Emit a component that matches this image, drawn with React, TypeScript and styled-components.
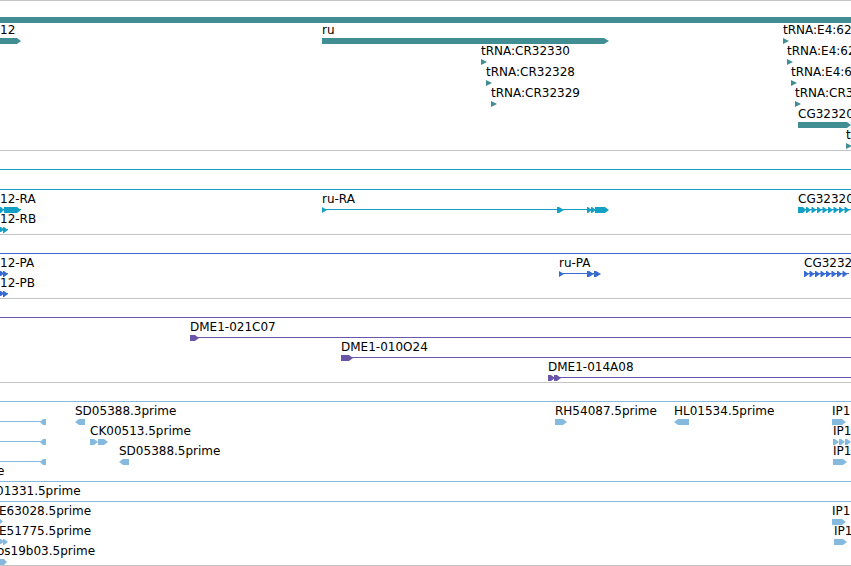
import styled, { createGlobalStyle } from "styled-components";

const GlobalStyle = createGlobalStyle`
  html, body {
    margin: 0;
    padding: 0;
    background: #fff;
  }
  body {
    font-family: "DejaVu Sans", "Liberation Sans", sans-serif;
  }
`;

const Browser = styled.div`
  width: 851px;
  height: 566px;
  overflow: hidden;
  display: flex;
  flex-direction: column;
  background: #fff;
`;

const Track = styled.section<{ $height?: number }>`
  flex: ${p => (p.$height ? "none" : "1")};
  height: ${p => (p.$height ? `${p.$height}px` : "auto")};
  box-sizing: border-box;
  border-top: 1px solid #c4c4c4;
  padding-top: 2px;
  display: flex;
  flex-direction: column;
`;

const Row = styled.div<{ $height: number }>`
  position: relative;
  flex: none;
  height: ${p => p.$height}px;
`;

const Feature = styled.div`
  position: absolute;
  top: 0;
  display: flex;
  flex-direction: column;
  align-items: flex-start;
`;

const Label = styled.span`
  display: block;
  margin-top: 1px;
  height: 11px;
  line-height: 11px;
  font-size: 12px;
  color: #000;
  white-space: nowrap;
`;

const Glyph = styled.svg`
  display: block;
  height: 8px;
  overflow: visible;

  rect {
    shape-rendering: crispEdges;
  }
`;

// x, width, height, direction, tip length
type Part = [number, number, number, "r" | "l" | "n", number];

interface GlyphSpec {
  w: number;
  line?: [number, number];
  parts?: Part[];
}

interface Feat {
  x: number;
  label?: string;
  glyph: GlyphSpec;
}

interface TrackSpec {
  name: string;
  height: number;
  rowHeight: number;
  color: string;
  rows: Feat[][];
}

const W = 851;

const rule = (x = 0): GlyphSpec => ({ w: W - x, line: [0, W - x] });
const tri: GlyphSpec = { w: 6, parts: [[0, 6, 6, "r", 6]] };
const block = (w: number, dir: "r" | "l", h = 6, tip = 4): GlyphSpec => ({
  w,
  parts: [[0, w, h, dir, tip]],
});
const chain = (start: number, n: number, step: number, h: number): Part[] =>
  Array.from({ length: n }, (_, i) => [start + i * step, 5, h, "r", 4] as Part);
const bacEnd = (parts: Part[], x: number): GlyphSpec => ({
  w: W - x,
  line: [0, W - x],
  parts,
});
const leftEst: GlyphSpec = { w: 45, line: [0, 42], parts: [[40, 6, 6, "l", 3]] };
const smallArrows: GlyphSpec = {
  w: 8,
  line: [0, 8],
  parts: [
    [0, 4, 5, "r", 3],
    [3, 5, 6, "r", 4],
  ],
};

const tracks: TrackSpec[] = [
  {
    name: "genes",
    height: 150,
    rowHeight: 21,
    color: "#408e93",
    rows: [
      [{ x: 0, glyph: { w: W, parts: [[0, W, 6, "n", 0]] } }],
      [
        { x: 0, label: "12", glyph: block(21, "r", 6, 4) },
        { x: 322, label: "ru", glyph: block(287, "r", 6, 5) },
        { x: 783, label: "tRNA:E4:62", glyph: tri },
      ],
      [
        { x: 481, label: "tRNA:CR32330", glyph: tri },
        { x: 787, label: "tRNA:E4:62", glyph: tri },
      ],
      [
        { x: 486, label: "tRNA:CR32328", glyph: tri },
        { x: 791, label: "tRNA:E4:6", glyph: tri },
      ],
      [
        { x: 491, label: "tRNA:CR32329", glyph: tri },
        { x: 795, label: "tRNA:CR3", glyph: tri },
      ],
      [{ x: 798, label: "CG32320", glyph: block(53, "r", 6, 4) }],
      [{ x: 846, label: "t", glyph: tri }],
    ],
  },
  {
    name: "transcripts",
    height: 84,
    rowHeight: 20,
    color: "#14a0c4",
    rows: [
      [{ x: 0, glyph: rule() }],
      [{ x: 0, glyph: rule() }],
      [
        {
          x: 0,
          label: "12-RA",
          glyph: {
            w: 21,
            line: [0, 21],
            parts: [
              [0, 4, 6, "r", 3],
              [4, 17, 6, "r", 4],
            ],
          },
        },
        {
          x: 322,
          label: "ru-RA",
          glyph: {
            w: 287,
            line: [0, 280],
            parts: [
              [0, 5, 6, "r", 5],
              [235, 7, 6, "r", 5],
              [265, 5, 6, "r", 4],
              [269, 5, 6, "r", 4],
              [273, 14, 6, "r", 4],
            ],
          },
        },
        {
          x: 798,
          label: "CG32320",
          glyph: {
            w: 53,
            line: [0, 53],
            parts: [[0, 8, 6, "r", 3], ...chain(8, 8, 5.5, 6)],
          },
        },
      ],
      [{ x: 0, label: "12-RB", glyph: smallArrows }],
    ],
  },
  {
    name: "proteins",
    height: 64,
    rowHeight: 20,
    color: "#386bd2",
    rows: [
      [{ x: 0, glyph: rule() }],
      [
        { x: 0, label: "12-PA", glyph: smallArrows },
        {
          x: 559,
          label: "ru-PA",
          glyph: {
            w: 42,
            line: [0, 40],
            parts: [
              [0, 5, 6, "r", 5],
              [28, 7, 6, "r", 5],
              [35, 7, 6, "r", 5],
            ],
          },
        },
        {
          x: 804,
          label: "CG3232",
          glyph: { w: 45, line: [0, 45], parts: chain(0, 8, 5.5, 6) },
        },
      ],
      [{ x: 0, label: "12-PB", glyph: smallArrows }],
    ],
  },
  {
    name: "bacs",
    height: 84,
    rowHeight: 20,
    color: "#6b55a8",
    rows: [
      [{ x: 0, glyph: rule() }],
      [{ x: 190, label: "DME1-021C07", glyph: bacEnd([[0, 9, 6, "r", 4]], 190) }],
      [{ x: 341, label: "DME1-010O24", glyph: bacEnd([[0, 12, 6, "r", 4]], 341) }],
      [
        {
          x: 548,
          label: "DME1-014A08",
          glyph: bacEnd(
            [
              [0, 7, 6, "r", 4],
              [6, 7, 6, "r", 4],
            ],
            548,
          ),
        },
      ],
    ],
  },
  {
    name: "ests",
    height: 183,
    rowHeight: 20,
    color: "#86b9de",
    rows: [
      [{ x: 0, glyph: rule() }],
      [
        { x: 0, glyph: leftEst },
        { x: 75, label: "SD05388.3prime", glyph: block(10, "l") },
        { x: 555, label: "RH54087.5prime", glyph: block(12, "r") },
        { x: 674, label: "HL01534.5prime", glyph: block(15, "l") },
        { x: 832, label: "IP1", glyph: block(14, "r") },
      ],
      [
        { x: 0, glyph: leftEst },
        {
          x: 90,
          label: "CK00513.5prime",
          glyph: {
            w: 18,
            parts: [
              [0, 8, 6, "r", 4],
              [8, 10, 6, "r", 4],
            ],
          },
        },
        {
          x: 833,
          label: "IP1",
          glyph: {
            w: 18,
            parts: [
              [0, 6, 6, "r", 4],
              [6, 6, 6, "r", 4],
              [12, 6, 6, "r", 4],
            ],
          },
        },
      ],
      [
        { x: 0, glyph: leftEst },
        { x: 119, label: "SD05388.5prime", glyph: block(10, "l") },
        { x: 833, label: "IP1", glyph: block(14, "r") },
      ],
      [{ x: -3, label: "e", glyph: rule(-3) }],
      [{ x: -4, label: "01331.5prime", glyph: rule(-4) }],
      [
        { x: -1, label: "E63028.5prime", glyph: { w: 4, parts: [[1, 3, 5, "r", 3]] } },
        { x: 832, label: "IP1", glyph: block(14, "r") },
      ],
      [
        {
          x: -1,
          label: "E51775.5prime",
          glyph: {
            w: 8,
            line: [1, 8],
            parts: [
              [1, 4, 5, "r", 3],
              [4, 5, 6, "r", 4],
            ],
          },
        },
        { x: 834, label: "IP1", glyph: block(13, "r") },
      ],
      [{ x: -3, label: "os19b03.5prime", glyph: { w: 10, parts: [[3, 7, 6, "r", 3]] } }],
    ],
  },
];

function partPoints([x, w, h, dir, tip]: Part): string {
  const top = Math.round(4.5 - h / 2);
  const bottom = top + h;
  const mid = top + h / 2;
  if (dir === "r") {
    return `${x},${top} ${x + w - tip},${top} ${x + w},${mid} ${x + w - tip},${bottom} ${x},${bottom}`;
  }
  if (dir === "l") {
    return `${x + tip},${top} ${x + w},${top} ${x + w},${bottom} ${x + tip},${bottom} ${x},${mid}`;
  }
  return `${x},${top} ${x + w},${top} ${x + w},${bottom} ${x},${bottom}`;
}

function FeatureGlyph({ spec, color }: { spec: GlyphSpec; color: string }) {
  return (
    <Glyph width={spec.w} viewBox={`0 0 ${spec.w} 8`}>
      {spec.line && (
        <rect x={spec.line[0]} y={4} width={spec.line[1] - spec.line[0]} height={1} fill={color} />
      )}
      {spec.parts?.map((p, i) => (
        <polygon key={i} points={partPoints(p)} fill={color} />
      ))}
    </Glyph>
  );
}

function App() {
  return (
    <Browser>
      <GlobalStyle />
      {tracks.map(track => (
        <Track key={track.name} $height={track.height}>
          {track.rows.map((row, r) => (
            <Row key={r} $height={track.rowHeight}>
              {row.map((f, i) => (
                <Feature key={i} style={{ left: f.x }}>
                  <Label>{f.label}</Label>
                  <FeatureGlyph spec={f.glyph} color={track.color} />
                </Feature>
              ))}
            </Row>
          ))}
        </Track>
      ))}
      <Track />
    </Browser>
  );
}

export default App;
